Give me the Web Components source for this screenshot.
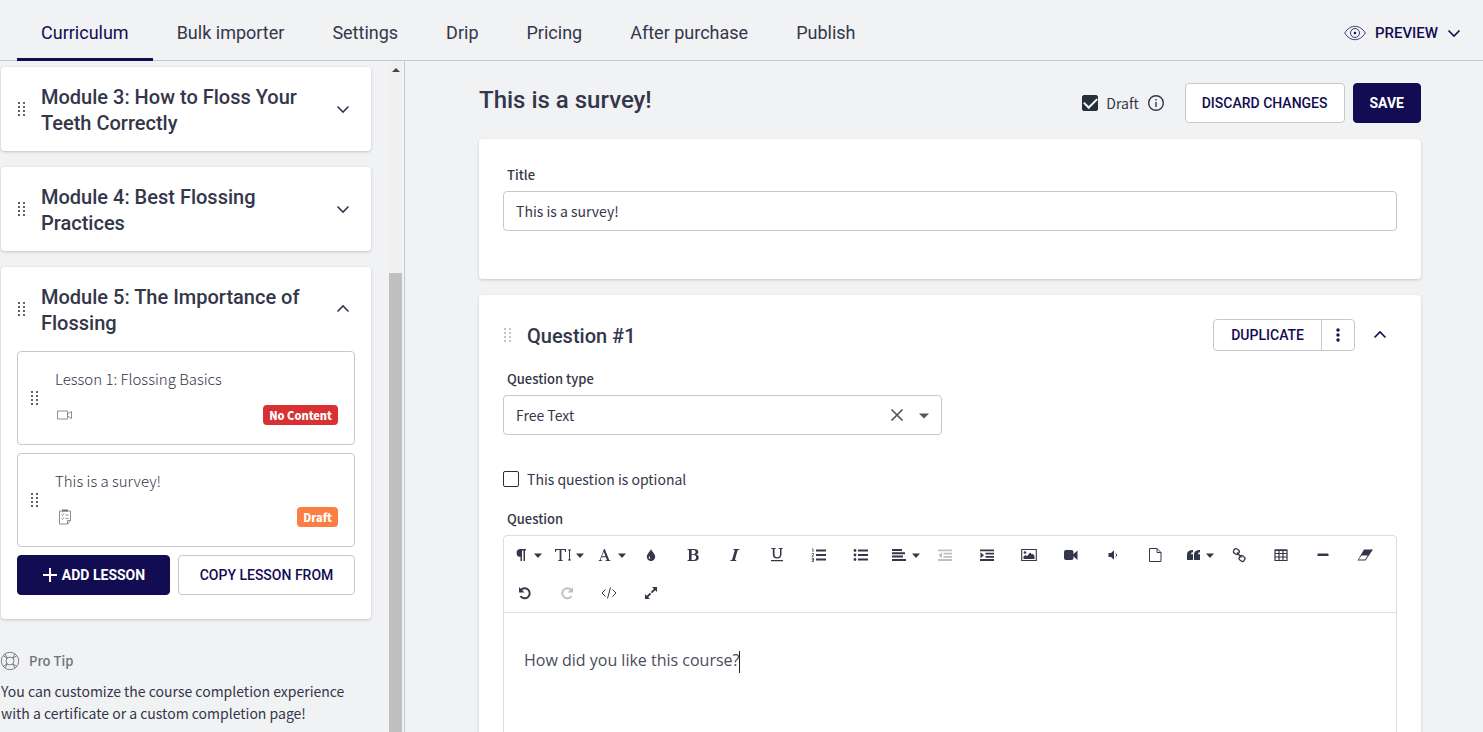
<!DOCTYPE html>
<html lang="en">
<head>
<meta charset="utf-8">
<title>Curriculum</title>
<style>
html, body { margin: 0; height: 100%; }
body {
  --ink: #34364a;
  --navy: #120c52;
  --line: #c6c9cc;
  --page: #f1f2f4;
  --display: Roboto, sans-serif;
  --copy: "Noto Sans CJK SC", sans-serif;
  background: var(--page);
  color: var(--ink);
  font: 14px/22px var(--copy);
  overflow: hidden;
}
</style>
</head>
<body>
<course-app>
  <top-nav slot="header">
    <nav-tab current>Curriculum</nav-tab>
    <nav-tab>Bulk importer</nav-tab>
    <nav-tab>Settings</nav-tab>
    <nav-tab>Drip</nav-tab>
    <nav-tab>Pricing</nav-tab>
    <nav-tab>After purchase</nav-tab>
    <nav-tab>Publish</nav-tab>
    <preview-menu slot="end"></preview-menu>
  </top-nav>

  <module-card slot="side"><span slot="title">Module 3: How to Floss Your Teeth Correctly</span></module-card>
  <module-card slot="side"><span slot="title">Module 4: Best Flossing Practices</span></module-card>
  <module-card slot="side" open>
    <span slot="title">Module 5: The Importance of Flossing</span>
    <lesson-row icon="video" status="No Content" tone="red">Lesson 1: Flossing Basics</lesson-row>
    <lesson-row icon="survey" status="Draft" tone="orange">This is a survey!</lesson-row>
    <ui-button slot="actions" primary style="flex: 153"><ui-icon name="plus"></ui-icon>ADD LESSON</ui-button>
    <ui-button slot="actions" style="flex: 177">COPY LESSON FROM</ui-button>
  </module-card>
  <pro-tip slot="side">You can customize the course completion experience with a certificate or a custom completion page!</pro-tip>

  <page-heading>This is a survey!
    <check-box slot="actions" checked info>Draft</check-box>
    <ui-button slot="actions">DISCARD CHANGES</ui-button>
    <ui-button slot="actions" primary>SAVE</ui-button>
  </page-heading>
  <panel-card><text-field label="Title" value="This is a survey!"></text-field></panel-card>
  <panel-card>
    <question-header>Question #1</question-header>
    <select-field label="Question type" value="Free Text"></select-field>
    <check-box>This question is optional</check-box>
    <rich-editor label="Question">How did you like this course?</rich-editor>
  </panel-card>
</course-app>

<script>
const define = (name, html, setup) => {
  const template = document.createElement('template');
  template.innerHTML = '<style>*{box-sizing:border-box}button,input,select{font:inherit;color:inherit}button{cursor:pointer}</style>' + html;
  customElements.define(name, class extends HTMLElement {
    connectedCallback() {
      if (this.shadowRoot) return;
      this.attachShadow({ mode: 'open' }).append(template.content.cloneNode(true));
      if (setup) setup(this, selector => this.shadowRoot.querySelector(selector));
    }
  });
};

const line = (body, width = 1.5) => `<g fill="none" stroke="currentColor" stroke-width="${width}">${body}</g>`;
const ICONS = {
  down: [14, 14, line('<path d="M1.5 4.5 7 10l5.500-5.500"/>', 1.6)],
  up: [14, 14, line('<path d="M1.500 9.500 7 4l5.500 5.500"/>', 1.6)],
  caret: [8, 16, '<path d="M0 6.500h8L4 11z"/>'],
  bigcaret: [10, 16, '<path d="M0 6.500h10L5 11.500z"/>'],
  drag: [8, 14, [0, 4, 8, 12].map(y => `<path d="M1 ${y}h2v2H1zM6 ${y}h2v2H6z" opacity=".8"/>`).join('')],
  plus: [16, 16, line('<path d="M8 1v14M1 8h14"/>', 2)],
  dots: [6, 16, '<circle cx="3" cy="3" r="1.700"/><circle cx="3" cy="8" r="1.700"/><circle cx="3" cy="13" r="1.700"/>'],
  clear: [14, 14, line('<path d="m1.500 1.500 11 11m0-11-11 11"/>', 1.7)],
  info: [18, 18, line('<circle cx="9" cy="9" r="7.300"/><path d="M9 8v5M9 5v1.500"/>', 1.4)],
  eye: [22, 16, line('<path d="M.7 8C6-.9 16-.9 21.300 8 16 16.900 6 16.900.7 8z"/><circle cx="11" cy="8" r="4.500"/>', 0.8) + '<circle cx="11" cy="8" r="1.200"/>'],
  video: [16, 10, line('<path d="M.5 1h10v8H.5zM10.500 4l4-2.500v7l-4-2.500"/>', 0.8)],
  survey: [14, 16, line('<path d="M1.500 2h11v9.500l-3 3.500h-8zM9.500 15v-3.500h3M3.500 5.500l1 1 1.500-2M3.500 9.500l1 1 1.500-2M7.500 6h3M7.500 9.500h3"/>', 0.8) + '<path d="M4 .5h6v2H4z"/>'],
  ring: [20, 20, line('<circle cx="10" cy="10" r="8.700"/><circle cx="10" cy="10" r="4"/><path d="m7.200 7.200-4-2.500m2-1.800 2 4.300m5.600 0 2-4.300m2 1.800-4 2.500m0 5.600 4 2.500m-2 1.800-2-4.300m-5.600 0-2 4.300m-2-1.800 4-2.500"/>', 0.9)],
  para: [18, 16, '<path d="M14 2H8.500a3.900 3.900 0 0 0 0 7.800V14H10V3.500h1.500V14H13V3.500h1z"/>'],
  size: [18, 16, '<path d="M1 2h11v3h-.7L10.500 3H7.400v10l1.600.4v.6H4v-.6l1.600-.4V3H2.500l-.8 2H1zM14 2.500h3v1h-1v9h1v1h-3v-1h1v-9h-1z"/>'],
  color: [18, 16, '<path d="m8.800 2 4.400 11 1.300.4v.6H9.400v-.6l1.500-.4-1-2.700H5.500L4.600 13l1.600.4v.6H2.500v-.6l1.300-.4L8 2zM5.900 9.300h3.600L7.700 4.700z"/>'],
  drop: [16, 16, '<path fill-rule="evenodd" d="M8 2c.8 2.700 4.200 4.700 4.200 7.800a4.200 4.200 0 0 1-8.400 0C3.800 6.700 7.200 4.700 8 2zM6 9.500c-.8 1.500.5 3 2 2.500C6.800 11.800 6.800 10.500 6.600 9z"/>'],
  bold: [16, 16, '<path fill-rule="evenodd" d="M2.500 2H9c3 0 4.300 1.200 4.300 2.900 0 1.400-1 2.400-2.500 2.700 1.900.3 3 1.400 3 3.100C13.800 12.700 12 14 9 14H2.500v-.7l1.500-.5V3.200l-1.500-.5zm4.100 1v4.200h1.800c1.400 0 2.200-.7 2.200-2.100S9.800 3 8.400 3zm0 5.100V13h2c1.600 0 2.500-.9 2.500-2.500s-1-2.400-2.600-2.400z"/>'],
  italic: [16, 16, '<path d="M6.500 2h6l-.2.7-1.700.5-2.700 9.600 1.500.5-.2.700h-6l.2-.7 1.700-.5 2.700-9.600-1.500-.5z"/>'],
  under: [16, 16, '<path d="M2 1h5v.6l-1.500.4v5c0 2.300 1 3.300 2.800 3.300S11 9.300 11 7V2l-1.500-.4V1H14v.6l-1.500.4v5c0 3-1.600 4.500-4.400 4.500C5.300 11.500 3.800 10 3.800 7V2L2 1.600zM2 13h12v1.200H2z"/>'],
  ol: [16, 16, '<path d="M5 2.500h10v2H5zM5 7h10v2H5zM5 11.500h10v2H5z"/>' + line('<path d="M1 2h1v3M.8 6.500h1.700v1L1 9.200h1.700M.8 11.200h1.700v3.300H.8m0-1.700h1.700"/>', 0.8)],
  ul: [16, 16, '<path d="M5 2.500h10v2H5zM5 7h10v2H5zM5 11.500h10v2H5z"/><circle cx="2" cy="3.500" r="1.400"/><circle cx="2" cy="8" r="1.400"/><circle cx="2" cy="12.500" r="1.400"/>'],
  align: [18, 16, '<path d="M2 2h10v2H2zM2 5.300h13v2H2zM2 8.600h11v2H2zM2 12h14v2H2z"/>'],
  outdent: [16, 16, '<path d="M1 2.500h14v1.800H1zM6.500 5.700H15v1.800H6.500zM6.500 8.900H15v1.800H6.500zM1 12.100h14v1.800H1zM5 5.200v6L1.500 8.200z"/>'],
  indent: [16, 16, '<path d="M1 2.500h14v1.800H1zM6.500 5.700H15v1.800H6.500zM6.500 8.900H15v1.800H6.500zM1 12.100h14v1.800H1zM1.500 5.200v6L5 8.200z"/>'],
  image: [16, 16, line('<path d="M.7 2.500h14.600v11H.7z"/>', 1.1) + '<circle cx="4" cy="5.500" r="1.300"/><path d="M2.500 12V9.500L4.500 8l1.500 1.200 3-3.700 2 2 .8-.8 1.700 2.300v3z"/>'],
  camera: [16, 16, '<rect x="1" y="3" width="9.500" height="10" rx="2"/><path d="m10 7.500 4.500-4v9.500L10 9z"/>'],
  sound: [16, 16, '<path d="M3.500 6H6l3-2.800v9.600L6 10H3.500z"/>' + line('<path d="M10.500 6.200c1.600.8 1.600 2.800 0 3.600"/>', 1)],
  file: [16, 16, line('<path d="M2.500 1.500H10l4 4v9h-11.500zM10 1.500v4h4"/>', 1)],
  quote: [18, 16, '<path d="M9 3v2.200c-1.500 0-2 .8-2 2h2V13H3V7.500C3 4.500 5 3 9 3zM16 3v2.200c-1.500 0-2 .8-2 2h2V13h-6V7.500c0-3 2-4.500 6-4.500z"/>'],
  link: [16, 16, line('<rect x="2.500" y="1.800" width="5.600" height="5" rx="2" transform="rotate(35 5 4.500)"/><rect x="8.200" y="9" width="5.600" height="5" rx="2" transform="rotate(35 11 11.500)"/><path d="m6 5.500 4.500 5"/>', 1.3)],
  table: [16, 16, line('<path d="M2 3h12v10.500H2zM2 6.500h12M2 10h12M6 3v10.500M10 3v10.500"/>', 1.2) + '<path d="M2 2.500h12V4H2z"/>'],
  rule: [16, 16, '<rect x="2.500" y="6.500" width="11" height="2.600" rx=".5"/>'],
  eraser: [16, 16, '<path fill-rule="evenodd" d="M7 2.500h9l-7.500 11h-8zM4.500 8.500l-2.800 4h6.300l2.800-4z"/>'],
  undo: [16, 16, line('<path d="M4 5a5 5 0 1 1-.5 6"/>', 2) + '<path d="M2 2v5.500h5.500z"/>'],
  redo: [16, 16, line('<path d="M12 5a5 5 0 1 0 .5 6"/>', 2) + '<path d="M14 2v5.500H8.500z"/>'],
  code: [16, 16, line('<path d="M4.500 4.500 1 8l3.500 3.500m7-7L15 8l-3.500 3.500M9.500 2.500l-3 11"/>', 1)],
  expand: [16, 16, line('<path d="m3.500 12.500 9-9" stroke-dasharray="5.800 1.200"/>', 1.8) + '<path d="M9 2h5v5zM2 9v5h5z"/>']
};

customElements.define('ui-icon', class extends HTMLElement {
  connectedCallback() {
    if (this.shadowRoot) return;
    const [w, h, body] = ICONS[this.getAttribute('name')];
    this.attachShadow({ mode: 'open' }).innerHTML =
      `<style>:host{display:inline-flex;flex:none}svg{display:block;fill:currentColor}</style>
       <svg width="${w}" height="${h}" viewBox="0 0 ${w} ${h}" aria-hidden="true">${body}</svg>`;
  }
});

define('course-app', `<style>
  :host { display: flex; flex-direction: column; height: 100vh; }
  .body { flex: 1; min-height: 0; display: flex; }
  aside { flex: none; width: 405px; display: flex; border-right: 1px solid var(--line); }
  .list { flex: 1; min-width: 0; overflow: hidden; display: flex; flex-direction: column; gap: 16px; padding: 6px 18px 0 1px; }
  .list ::slotted(*) { flex: none; }
  .bar { width: 13px; margin-right: 2px; background: #f0f0f1; display: flex; flex-direction: column; align-items: center; }
  .bar i { border: 4px solid transparent; border-top: 0; border-bottom-color: #444; margin-top: 7px; }
  .bar b { flex: none; align-self: stretch; height: 1000px; margin-top: 201px; background: #c0c0c0; }
  .bar { overflow: hidden; }
  main { flex: 1; min-width: 0; overflow: hidden; padding: 22px 62px 0 74px; display: flex; flex-direction: column; gap: 16px; }
  ::slotted(panel-card) { flex: none; }
  ::slotted(panel-card:last-of-type) { min-height: 460px; }
</style>
<slot name="header"></slot>
<div class="body">
  <aside><div class="list"><slot name="side"></slot></div><div class="bar" aria-hidden="true"><i></i><b></b></div></aside>
  <main><slot></slot></main>
</div>`);

define('top-nav', `<style>
  :host { flex: none; display: flex; height: 61px; padding: 0 22px 0 17px; border-bottom: 1px solid var(--line); box-sizing: border-box; }
  nav { display: flex; flex: 1; margin-bottom: -1px; }
</style><nav><slot></slot></nav><slot name="end"></slot>`);

define('nav-tab', `<style>
  :host { display: flex; }
  a { display: flex; align-items: center; padding: 8px 24px 0; border-bottom: 3px solid transparent; font: 18px/24px var(--display); color: inherit; text-decoration: none; white-space: nowrap; }
  :host([current]) a { color: var(--navy); border-color: var(--navy); }
</style><a href="#"><slot></slot></a>`);

define('preview-menu', `<style>
  :host { display: flex; align-items: center; padding-top: 5px; color: var(--navy); }
  button { display: flex; align-items: center; gap: 9px; padding: 0; border: 0; background: none; font: 500 15px/20px var(--display); }
</style><button type="button"><ui-icon name="eye"></ui-icon>PREVIEW<ui-icon name="down"></ui-icon></button>`);

define('ui-button', `<style>
  :host { display: flex; min-width: 0; }
  button { flex: 1; height: 40px; display: flex; align-items: center; justify-content: center; gap: 4px; padding: 0 16px; border: 1px solid var(--line); border-radius: 4px; background: #fff; color: var(--navy); font: 500 14px/20px var(--display); white-space: nowrap; }
  :host([primary]) button { background: var(--navy); border-color: var(--navy); color: #fff; font-weight: 700; }
</style><button type="button"><slot></slot></button>`);

define('module-card', `<style>
  :host { display: block; background: #fff; border-radius: 4px; box-shadow: 0 1px 3px rgba(40, 45, 60, .24); }
  header { display: flex; align-items: center; gap: 16px; height: 84px; padding: 0 21px 0 16px; }
  h2 { flex: 1; margin: 0; font: 500 20px/26px var(--display); padding: 2px 16px 0 0; }
  header button { display: flex; padding: 0; border: 0; background: none; }
  .content { display: none; flex-direction: column; gap: 8px; padding: 0 16px 24px; }
  :host([open]) .content { display: flex; }
  .actions { display: flex; gap: 8px; }
</style>
<header><ui-icon name="drag"></ui-icon><h2><slot name="title"></slot></h2><button type="button" aria-label="Toggle module"></button></header>
<div class="content"><slot></slot><div class="actions"><slot name="actions"></slot></div></div>`,
(host, $) => { $('header button').innerHTML = `<ui-icon name="${host.hasAttribute('open') ? 'up' : 'down'}"></ui-icon>`; });

define('lesson-row', `<style>
  :host { display: flex; align-items: center; gap: 17px; height: 94px; box-sizing: border-box; padding: 0 16px 0 12px; border: 1px solid var(--line); border-radius: 4px; }
  .text { flex: 1; display: flex; flex-direction: column; gap: 15px; padding-bottom: 3px; font-weight: 300; font-size: 15px; }
  .meta { display: flex; align-items: center; justify-content: space-between; height: 20px; color: #6f727c; }
  .icon { display: flex; justify-content: center; width: 20px; }
  .badge { padding: 0 6px; border-radius: 4px; background: #d93033; color: #fff; font: 900 11px/20px var(--copy); }
  :host([tone=orange]) .badge { background: #fd7e42; }
</style>
<ui-icon name="drag"></ui-icon>
<div class="text"><span><slot></slot></span><div class="meta"><span class="icon"></span><span class="badge"></span></div></div>`,
(host, $) => {
  $('.icon').innerHTML = `<ui-icon name="${host.getAttribute('icon')}"></ui-icon>`;
  $('.badge').textContent = host.getAttribute('status');
});

define('pro-tip', `<style>
  :host { display: block; padding-top: 15px; }
  h3 { display: flex; align-items: center; gap: 9px; margin: 0 0 8px -1px; font: 500 13px/22px var(--copy); color: #6f727c; }
  p { margin: 0; }
</style><h3><ui-icon name="ring"></ui-icon>Pro Tip</h3><p><slot></slot></p>`);

define('page-heading', `<style>
  :host { display: flex; align-items: center; height: 40px; }
  h1 { flex: 1; margin: 0; padding-bottom: 6px; font: 500 24px/32px var(--display); }
  .actions { display: flex; align-items: center; gap: 8px; }
  ::slotted(check-box) { margin-right: 12px; }
</style><h1><slot></slot></h1><div class="actions"><slot name="actions"></slot></div>`);

define('check-box', `<style>
  :host { display: flex; align-items: center; gap: 8px; }
  label { display: flex; align-items: center; gap: 8px; }
  input { appearance: none; display: grid; place-items: center; flex: none; width: 16px; height: 16px; margin: 0; border: 1px solid #25303b; border-radius: 2px; background: #fff; }
  input:checked { background: #25303b; }
  input:checked::after { content: ""; width: 11px; height: 6px; border: solid #fff; border-width: 0 0 2px 2px; transform: rotate(-45deg) translate(1px, -1px); }
  ui-icon { display: none; }
  :host([info]) ui-icon { display: flex; }
</style><label><input type="checkbox"><span><slot></slot></span></label><ui-icon name="info"></ui-icon>`,
(host, $) => { $('input').checked = host.hasAttribute('checked'); });

define('panel-card', `<style>
  :host { display: block; box-sizing: border-box; padding: 24px; background: #fff; border-radius: 4px; box-shadow: 0 1px 3px rgba(40, 45, 60, .2); }
  ::slotted(select-field) { margin: 16px 0 32px; }
  ::slotted(check-box) { height: 24px; margin-bottom: 16px; }
  ::slotted(text-field) { margin-bottom: 24px; }
</style><slot></slot>`);

const LABEL = 'label,.label{display:block;padding:0 4px 4px;font:500 13px/24px var(--copy)}';

define('text-field', `<style>
  :host { display: block; } ${LABEL}
  input { display: block; width: 100%; height: 40px; padding: 0 12px; border: 1px solid var(--line); border-radius: 4px; background: #fff; }
</style><label for="field"></label><input id="field" type="text">`,
(host, $) => { $('label').textContent = host.getAttribute('label'); $('input').value = host.getAttribute('value'); });

define('select-field', `<style>
  :host { display: block; } ${LABEL}
  .box { display: flex; align-items: center; max-width: 439px; height: 40px; padding-right: 12px; border: 1px solid var(--line); border-radius: 4px; color: #555; }
  select { flex: 1; height: 38px; appearance: none; padding: 0 12px; border: 0; background: none; color: var(--ink); }
  button { display: flex; padding: 0; margin-right: 15px; border: 0; background: none; }
</style><label for="field"></label>
<div class="box"><select id="field"><option></option></select><button type="button" aria-label="Clear"><ui-icon name="clear"></ui-icon></button><ui-icon name="bigcaret"></ui-icon></div>`,
(host, $) => { $('label').textContent = host.getAttribute('label'); $('option').textContent = host.getAttribute('value'); });

define('question-header', `<style>
  :host { display: flex; align-items: center; height: 32px; gap: 16px; }
  .grip { display: flex; color: #b5b6bb; }
  h2 { flex: 1; margin: 0; padding-top: 2px; font: 500 20px/26px var(--display); }
  .group { display: flex; height: 32px; border: 1px solid var(--line); border-radius: 4px; color: var(--navy); }
  button { display: flex; align-items: center; padding: 0 17px; border: 0; background: none; font: 500 14px/20px var(--display); }
  .more { padding: 0 13px; border-left: 1px solid var(--line); }
  .toggle { padding: 0 2px; color: var(--navy); margin-right: 8px; }
</style>
<span class="grip"><ui-icon name="drag"></ui-icon></span><h2><slot></slot></h2>
<div class="group"><button type="button">DUPLICATE</button><button type="button" class="more" aria-label="More"><ui-icon name="dots"></ui-icon></button></div>
<button type="button" class="toggle" aria-label="Collapse"><ui-icon name="up"></ui-icon></button>`);

const TOOLS = 'para+ size+ color+ drop bold italic under ol ul align+ outdent- indent image camera sound file quote+ link table rule eraser undo redo- code expand'.split(' ');

define('rich-editor', `<style>
  :host { display: block; } ${LABEL}
  .frame { border: 1px solid #dcdde0; border-radius: 4px; }
  .tools { display: flex; flex-wrap: wrap; border-bottom: 1px solid #dcdde0; padding-right: 8px; }
  .tools button { display: flex; align-items: center; justify-content: center; width: 42px; height: 38px; padding: 0; border: 0; background: none; }
  .tools button.menu { gap: 4px; padding-left: 3px; }
  .tools button:disabled { color: #bfc0c4; }
  .doc { min-height: 180px; padding: 35px 20px; font: 16px/24px "Open Sans", sans-serif; color: #4a4c5c; outline: 0; }
  .cursor { display: inline-block; width: 1px; height: 22px; background: #222; vertical-align: middle; }
</style>
<div class="label" id="label"></div>
<div class="frame"><div class="tools" role="toolbar"></div>
<div class="doc" role="textbox" aria-labelledby="label" contenteditable="true"><slot></slot><span class="cursor"></span></div></div>`,
(host, $) => {
  $('.label').textContent = host.getAttribute('label');
  $('.tools').innerHTML = TOOLS.map(tool => {
    const name = tool.replace(/[+-]/, '');
    const menu = tool.endsWith('+');
    return `<button type="button" aria-label="${name}"${menu ? ' class="menu"' : ''}${tool.endsWith('-') ? ' disabled' : ''}><ui-icon name="${name}"></ui-icon>${menu ? '<ui-icon name="caret"></ui-icon>' : ''}</button>`;
  }).join('');
});
</script>
</body>
</html>
